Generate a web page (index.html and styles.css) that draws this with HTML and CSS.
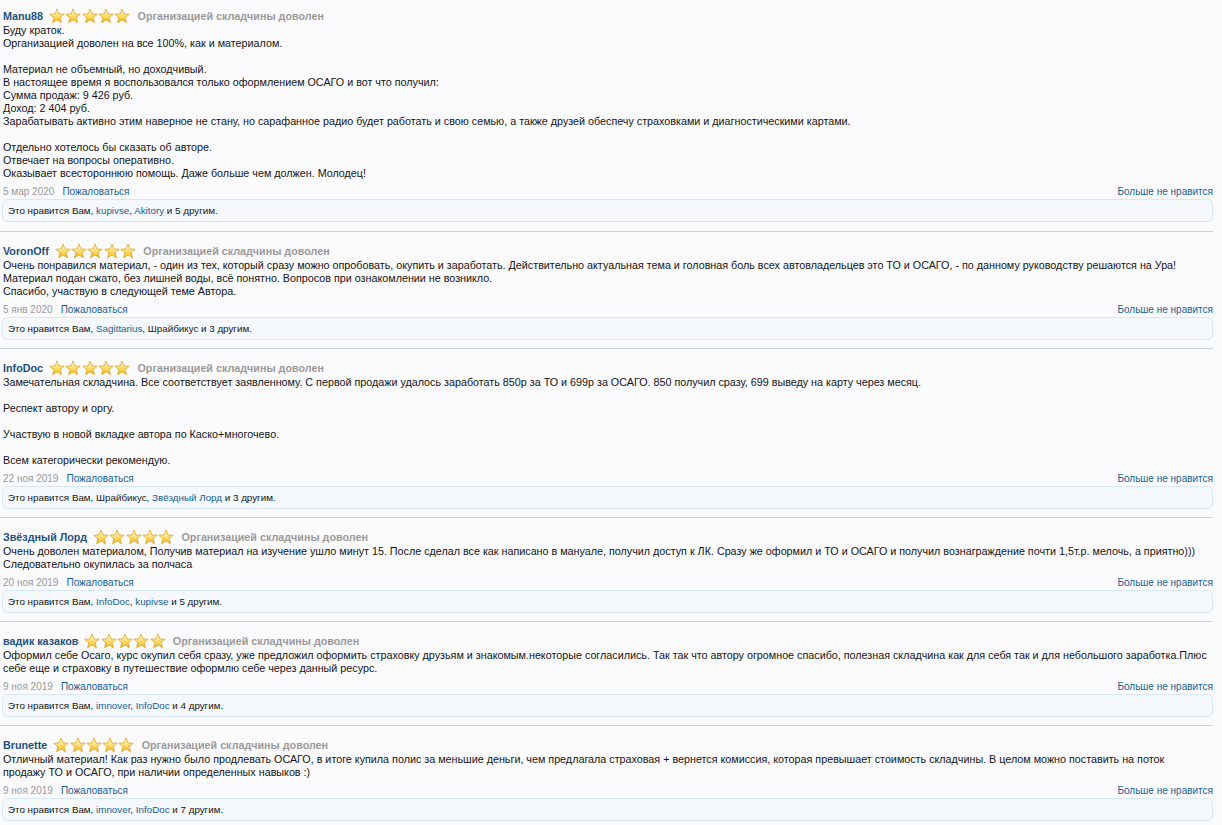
FILE: index.html
```html
<!DOCTYPE html>
<html lang="ru">
<head>
  <meta charset="UTF-8">
  <title>Отзывы о складчине</title>
  <link rel="stylesheet" href="styles.css">
</head>
<body>
  <!-- shared star shape + gradient -->
  <svg class="defs" width="0" height="0" aria-hidden="true">
    <defs>
      <linearGradient id="starFill" x1="0" y1="0" x2="0" y2="1">
        <stop offset="0" stop-color="#fffbd8"/>
        <stop offset="0.45" stop-color="#ffe27a"/>
        <stop offset="1" stop-color="#f2b515"/>
      </linearGradient>
      <symbol id="star" viewBox="0 0 16 16">
        <path d="M8 1 L9.94 5.93 L15.23 6.25 L11.14 9.62 L12.47 14.75 L8 11.9 L3.53 14.75 L4.86 9.62 L0.77 6.25 L6.06 5.93Z" fill="url(#starFill)" stroke="#dba62a" stroke-width="0.8" stroke-linejoin="round"/>
      </symbol>
    </defs>
  </svg>

  <div class="reviews">

    <div class="review first">
      <div class="review-head">
        <a class="username" href="#">Manu88</a>
        <span class="stars"><svg><use href="#star"/></svg><svg><use href="#star"/></svg><svg><use href="#star"/></svg><svg><use href="#star"/></svg><svg><use href="#star"/></svg></span>
        <span class="rating-text">Организацией складчины доволен</span>
      </div>
      <div class="review-body">
        Буду краток.<br>
        Организацией доволен на все 100%, как и материалом.<br>
        <br>
        Материал не объемный, но доходчивый.<br>
        В настоящее время я воспользовался только оформлением ОСАГО и вот что получил:<br>
        Сумма продаж: 9 426 руб.<br>
        Доход: 2 404 руб.<br>
        Зарабатывать активно этим наверное не стану, но сарафанное радио будет работать и свою семью, а также друзей обеспечу страховками и диагностическими картами.<br>
        <br>
        Отдельно хотелось бы сказать об авторе.<br>
        Отвечает на вопросы оперативно.<br>
        Оказывает всестороннюю помощь. Даже больше чем должен. Молодец!
      </div>
      <div class="review-meta">
        <span class="date">5 мар 2020</span>
        <a class="report" href="#">Пожаловаться</a>
        <a class="unlike" href="#">Больше не нравится</a>
      </div>
      <div class="likes">Это нравится Вам, <a href="#">kupivse</a>, <a href="#">Akitory</a> и 5 другим.</div>
    </div>

    <div class="review">
      <div class="review-head">
        <a class="username" href="#">VoronOff</a>
        <span class="stars"><svg><use href="#star"/></svg><svg><use href="#star"/></svg><svg><use href="#star"/></svg><svg><use href="#star"/></svg><svg><use href="#star"/></svg></span>
        <span class="rating-text">Организацией складчины доволен</span>
      </div>
      <div class="review-body">
        Очень понравился материал, - один из тех, который сразу можно опробовать, окупить и заработать. Действительно актуальная тема и головная боль всех автовладельцев это ТО и ОСАГО, - по данному руководству решаются на Ура!<br>
        Материал подан сжато, без лишней воды, всё понятно. Вопросов при ознакомлении не возникло.<br>
        Спасибо, участвую в следующей теме Автора.
      </div>
      <div class="review-meta">
        <span class="date">5 янв 2020</span>
        <a class="report" href="#">Пожаловаться</a>
        <a class="unlike" href="#">Больше не нравится</a>
      </div>
      <div class="likes">Это нравится Вам, <a href="#">Sagittarius</a>, <a class="plain" href="#">Шрайбикус</a> и 3 другим.</div>
    </div>

    <div class="review">
      <div class="review-head">
        <a class="username" href="#">InfoDoc</a>
        <span class="stars"><svg><use href="#star"/></svg><svg><use href="#star"/></svg><svg><use href="#star"/></svg><svg><use href="#star"/></svg><svg><use href="#star"/></svg></span>
        <span class="rating-text">Организацией складчины доволен</span>
      </div>
      <div class="review-body">
        Замечательная складчина. Все соответствует заявленному. С первой продажи удалось заработать 850р за ТО и 699р за ОСАГО. 850 получил сразу, 699 выведу на карту через месяц.<br>
        <br>
        Респект автору и оргу.<br>
        <br>
        Участвую в новой вкладке автора по Каско+многочево.<br>
        <br>
        Всем категорически рекомендую.
      </div>
      <div class="review-meta">
        <span class="date">22 ноя 2019</span>
        <a class="report" href="#">Пожаловаться</a>
        <a class="unlike" href="#">Больше не нравится</a>
      </div>
      <div class="likes">Это нравится Вам, <a class="plain" href="#">Шрайбикус</a>, <a href="#">Звёздный Лорд</a> и 3 другим.</div>
    </div>

    <div class="review">
      <div class="review-head">
        <a class="username" href="#">Звёздный Лорд</a>
        <span class="stars"><svg><use href="#star"/></svg><svg><use href="#star"/></svg><svg><use href="#star"/></svg><svg><use href="#star"/></svg><svg><use href="#star"/></svg></span>
        <span class="rating-text">Организацией складчины доволен</span>
      </div>
      <div class="review-body">
        Очень доволен материалом, Получив материал на изучение ушло минут 15. После сделал все как написано в мануале, получил доступ к ЛК. Сразу же оформил и ТО и ОСАГО и получил вознаграждение почти 1,5т.р. мелочь, а приятно)))<br>
        Следовательно окупилась за полчаса
      </div>
      <div class="review-meta">
        <span class="date">20 ноя 2019</span>
        <a class="report" href="#">Пожаловаться</a>
        <a class="unlike" href="#">Больше не нравится</a>
      </div>
      <div class="likes">Это нравится Вам, <a href="#">InfoDoc</a>, <a href="#">kupivse</a> и 5 другим.</div>
    </div>

    <div class="review">
      <div class="review-head">
        <a class="username" href="#">вадик казаков</a>
        <span class="stars"><svg><use href="#star"/></svg><svg><use href="#star"/></svg><svg><use href="#star"/></svg><svg><use href="#star"/></svg><svg><use href="#star"/></svg></span>
        <span class="rating-text">Организацией складчины доволен</span>
      </div>
      <div class="review-body">
        Оформил себе Осаго, курс окупил себя сразу, уже предложил оформить страховку друзьям и знакомым.некоторые согласились. Так так что автору огромное спасибо, полезная складчина как для себя так и для небольшого заработка.Плюс себе еще и страховку в путешествие оформлю себе через данный ресурс.
      </div>
      <div class="review-meta">
        <span class="date">9 ноя 2019</span>
        <a class="report" href="#">Пожаловаться</a>
        <a class="unlike" href="#">Больше не нравится</a>
      </div>
      <div class="likes">Это нравится Вам, <a href="#">imnover</a>, <a href="#">InfoDoc</a> и 4 другим.</div>
    </div>

    <div class="review">
      <div class="review-head">
        <a class="username" href="#">Brunette</a>
        <span class="stars"><svg><use href="#star"/></svg><svg><use href="#star"/></svg><svg><use href="#star"/></svg><svg><use href="#star"/></svg><svg><use href="#star"/></svg></span>
        <span class="rating-text">Организацией складчины доволен</span>
      </div>
      <div class="review-body">
        Отличный материал! Как раз нужно было продлевать ОСАГО, в итоге купила полис за меньшие деньги, чем предлагала страховая + вернется комиссия, которая превышает стоимость складчины. В целом можно поставить на поток<br>
        продажу ТО и ОСАГО, при наличии определенных навыков :)
      </div>
      <div class="review-meta">
        <span class="date">9 ноя 2019</span>
        <a class="report" href="#">Пожаловаться</a>
        <a class="unlike" href="#">Больше не нравится</a>
      </div>
      <div class="likes">Это нравится Вам, <a href="#">imnover</a>, <a href="#">InfoDoc</a> и 7 другим.</div>
    </div>

  </div>
</body>
</html>
```

FILE: styles.css
```css
html, body {
  margin: 0;
  padding: 0;
}

* {
  box-sizing: border-box;
}

body {
  font-family: "Liberation Sans", Arial, sans-serif;
  font-size: 10.75px;
  color: #141414;
  background-color: #fbfbfe;
}

a {
  text-decoration: none;
  color: #176093;
}

.defs {
  position: absolute;
  width: 0;
  height: 0;
}

.reviews {
  width: 1213px;
}

/* one review block */
.review {
  padding: 10px 0 8px 2px;
  border-bottom: 1px solid #c5d3e1;
}
.review.first {
  padding-top: 7px;
  padding-bottom: 9px;
}

.review-head {
  display: flex;
  align-items: center;
  height: 17px;
  padding-left: 1px;
}
.username {
  font-weight: bold;
  color: #22507e;
}
.stars {
  display: flex;
  margin: 0 7px 0 6px;
}
.stars svg {
  width: 16px;
  height: 16px;
  margin-right: 0.3px;
}
.rating-text {
  font-weight: bold;
  color: #9a9a9a;
}

.review-body {
  line-height: 13px;
  padding-left: 1px;
}

.review-meta {
  display: flex;
  align-items: center;
  height: 14px;
  margin-top: 4px;
  padding-left: 1px;
  font-size: 10px;
}
.review-meta .date {
  color: #9a9a9a;
  margin-right: 8px;
}
.review-meta .unlike {
  margin-left: auto;
}

.likes {
  margin-top: 1px;
  height: 23px;
  padding: 4px 5px;
  line-height: 13px;
  font-size: 9.8px;
  color: #141414;
  background-color: #f5f9fd;
  border: 1px solid #d9e8f6;
  border-radius: 5px;
}
.likes a.plain {
  color: #222;
}
```
